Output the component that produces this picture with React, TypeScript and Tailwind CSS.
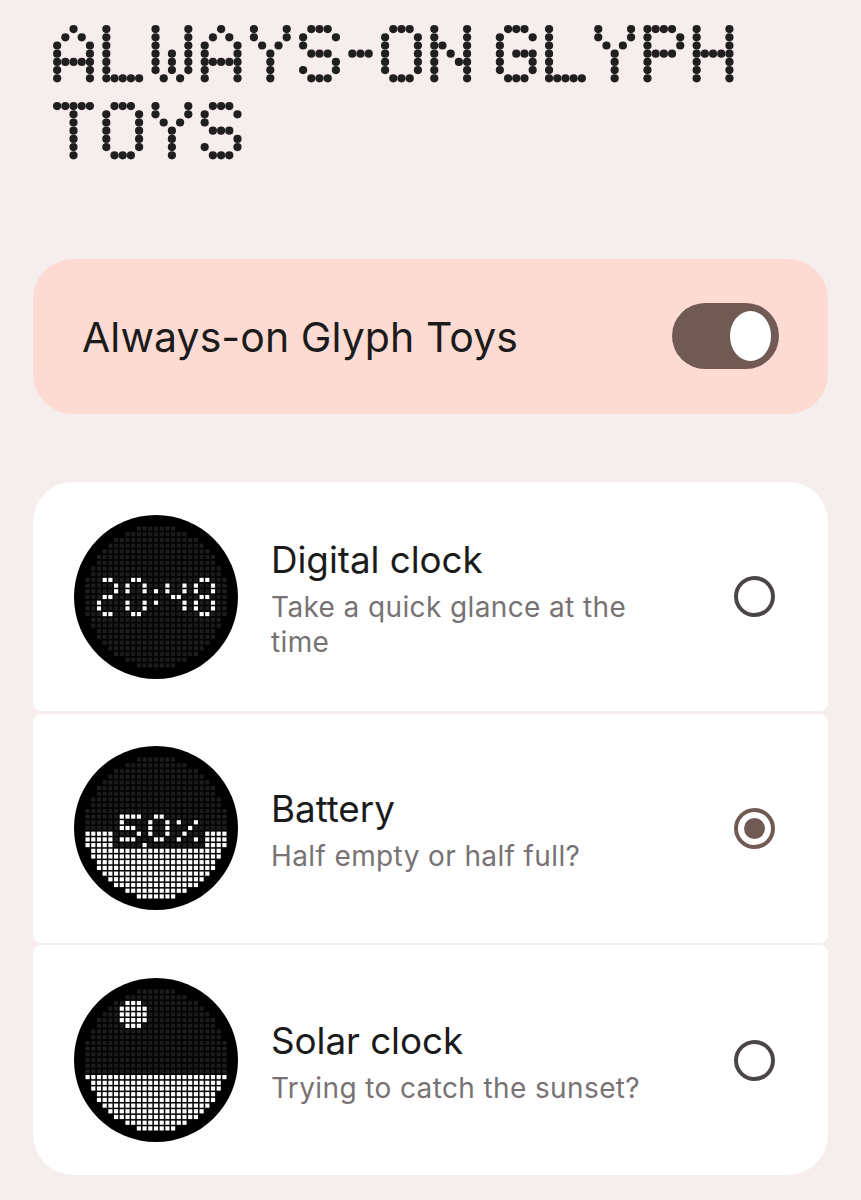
import { useState } from 'react';

// 5x7 dot font, one string per row
const FONT: Record<string, string[]> = {
  A: ['..#..', '.#.#.', '#...#', '#...#', '#####', '#...#', '#...#'],
  G: ['.###.', '#...#', '#....', '#.###', '#...#', '#...#', '.###.'],
  H: ['#...#', '#...#', '#...#', '#####', '#...#', '#...#', '#...#'],
  L: ['#....', '#....', '#....', '#....', '#....', '#....', '#####'],
  N: ['#...#', '#...#', '##..#', '#.#.#', '#..##', '#...#', '#...#'],
  O: ['.###.', '#...#', '#...#', '#...#', '#...#', '#...#', '.###.'],
  P: ['####.', '#...#', '#...#', '####.', '#....', '#....', '#....'],
  S: ['.###.', '#...#', '#....', '.###.', '....#', '#...#', '.###.'],
  T: ['#####', '..#..', '..#..', '..#..', '..#..', '..#..', '..#..'],
  W: ['#...#', '#...#', '#...#', '#.#.#', '#.#.#', '#.#.#', '.#.#.'],
  Y: ['#...#', '#...#', '.#.#.', '..#..', '..#..', '..#..', '..#..'],
  '-': ['...', '...', '...', '###', '...', '...', '...'],
  ' ': ['.', '.', '.', '.', '.', '.', '.'],
};

const DOT = 8.2;

function DotLine({ text }: { text: string }) {
  const rows = Array.from({ length: 7 }, (_, r) => text.split('').map((ch) => FONT[ch][r]).join('.'));
  const width = rows[0].length * DOT;
  return (
    <svg aria-hidden="true" width={width} height={7 * DOT} viewBox={`0 0 ${width} ${7 * DOT}`} className="block overflow-visible">
      {rows.map((row, r) =>
        row.split('').map((c, i) =>
          c === '#' ? <circle key={`${r}-${i}`} cx={(i + 0.5) * DOT} cy={(r + 0.5) * DOT} r={4.1} fill="#1f1f1f" /> : null
        )
      )}
    </svg>
  );
}

// number of leds on each row of the round 25x25 matrix
const ROW_WIDTHS = [7, 11, 15, 17, 19, 21, 21, 23, 23, 25, 25, 25, 25, 25, 25, 25, 23, 23, 21, 21, 19, 17, 15, 11, 7];
const PITCH = 5.7;

type Leds = Record<number, number[]>;

const CLOCK: Leds = {
  9: [3, 4, 8, 9, 20, 21],
  10: [5, 7, 10, 14, 17, 19, 22],
  11: [5, 7, 10, 12, 14, 17, 19, 22],
  12: [3, 4, 15, 16, 20, 21],
  13: [2, 7, 10, 12, 17, 19, 22],
  14: [2, 7, 10, 17, 19, 22],
  15: [3, 4, 8, 9, 20, 21],
};

const SIDES = [0, 1, 2, 3, 4, 21, 22, 23, 24];

const BATTERY: Leds = {
  10: [6, 7, 8, 9, 12, 13],
  11: [6, 11, 14, 16, 19],
  12: [6, 7, 8, 11, 14, 18],
  13: [...SIDES, 9, 11, 14, 17],
  14: [...SIDES, 6, 7, 8, 12, 13, 16, 19],
  15: [...SIDES, 10],
};

const SOLAR: Leds = {
  2: [7, 8, 9],
  3: [6, 7, 8, 9, 10],
  4: [6, 7, 8, 9, 10],
  5: [6, 7, 8, 9, 10],
  6: [7, 8, 9],
};

function GlyphMatrix({ leds, fillFrom }: { leds: Leds; fillFrom: number }) {
  return (
    <svg viewBox="0 0 164 164" className="block size-[164px] shrink-0">
      <circle cx="82" cy="82" r="82" fill="#000" />
      {ROW_WIDTHS.map((count, r) => {
        const start = (25 - count) / 2;
        return Array.from({ length: count }, (_, i) => {
          const c = start + i;
          const on = r >= fillFrom || leds[r]?.includes(c);
          return (
            <rect
              key={`${r}-${c}`}
              x={82 + (c - 12) * PITCH - 2.1}
              y={82 + (r - 12) * PITCH - 2.1}
              width="4.2"
              height="4.2"
              fill={on ? '#fff' : '#1c1c1c'}
            />
          );
        });
      })}
    </svg>
  );
}

const toys = [
  { id: 'digital', name: 'Digital clock', description: 'Take a quick glance at the time', leds: CLOCK, fillFrom: 25 },
  { id: 'battery', name: 'Battery', description: 'Half empty or half full?', leds: BATTERY, fillFrom: 16 },
  { id: 'solar', name: 'Solar clock', description: 'Trying to catch the sunset?', leds: SOLAR, fillFrom: 15 },
];

export default function App() {
  const [enabled, setEnabled] = useState(true);
  const [selected, setSelected] = useState('battery');

  return (
    <main className="h-[1200px] overflow-hidden bg-[#f6eeed] px-[33px] pt-[24.5px] font-['Inter',sans-serif] text-[#1c1b1b]">
      <h1 aria-label="Always-on Glyph Toys" className="flex h-[234px] flex-col gap-[20.6px] pl-[20.2px]">
        <DotLine text="ALWAYS-ON GLYPH" />
        <DotLine text="TOYS" />
      </h1>

      <div className="flex h-[155.3px] items-center justify-between rounded-[40px] bg-[#fddbd3] px-[49px]">
        <span className="pt-[3px] text-[41px] leading-none tracking-[0.08px]">Always-on Glyph Toys</span>
        <button
          role="switch"
          aria-checked={enabled}
          onClick={() => setEnabled(!enabled)}
          className={`flex h-[66px] w-[107px] items-center rounded-full bg-[#705a53] px-2 ${enabled ? 'justify-end' : 'justify-start'}`}
        >
          <span className="h-[50px] w-[41.5px] rounded-[50%] bg-white" />
        </button>
      </div>

      <div role="radiogroup" className="mt-[68.3px] flex flex-col gap-[2.4px]">
        {toys.map((toy) => (
          <button
            key={toy.id}
            role="radio"
            aria-checked={selected === toy.id}
            onClick={() => setSelected(toy.id)}
            className="flex h-[229.3px] items-center rounded-lg bg-white pr-[53px] pl-[41px] text-left first:rounded-t-[40px] last:rounded-b-[40px]"
          >
            <GlyphMatrix leds={toy.leds} fillFrom={toy.fillFrom} />
            <div className="ml-[33px] flex-1 pt-1">
              <div className="text-[36.8px] leading-[46px] tracking-[-0.05px]">{toy.name}</div>
              <div className="mt-[7px] w-[400px] text-[28px] leading-[35px] tracking-[0.38px] text-[#777374]">{toy.description}</div>
            </div>
            <span
              className={`flex size-[41px] shrink-0 items-center justify-center rounded-full border-4 ${selected === toy.id ? 'border-[#705a53]' : 'border-[#4a4645]'}`}
            >
              {selected === toy.id && <span className="size-[21px] rounded-full bg-[#705a53]" />}
            </span>
          </button>
        ))}
      </div>
    </main>
  );
}
